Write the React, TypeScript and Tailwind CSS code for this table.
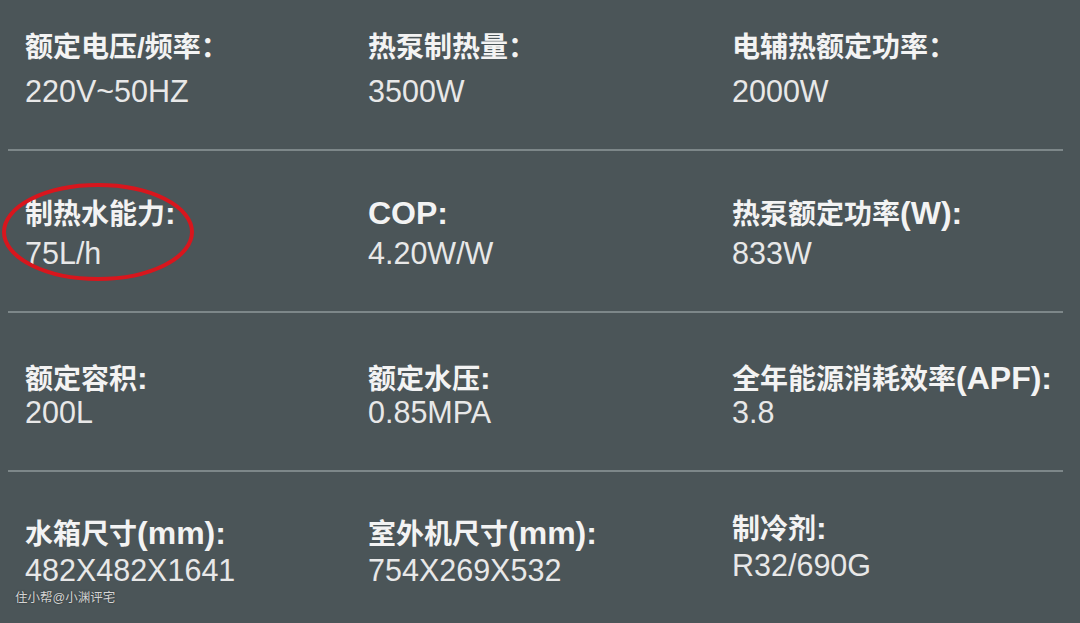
const rows = [
  {
    pt: "pt-[31px]",
    gap: "mt-[8px]",
    h: "h-[149px]",
    items: [
      ["额定电压/频率：", "220V~50HZ"],
      ["热泵制热量：", "3500W"],
      ["电辅热额定功率：", "2000W"],
    ],
  },
  {
    pt: "pt-[45px]",
    gap: "mt-[3px]",
    h: "h-[160px]",
    items: [
      ["制热水能力:", "75L/h"],
      ["COP:", "4.20W/W"],
      ["热泵额定功率(W):", "833W"],
    ],
  },
  {
    pt: "pt-[48px]",
    gap: "-mt-[3px]",
    h: "h-[157px]",
    items: [
      ["额定容积:", "200L"],
      ["额定水压:", "0.85MPA"],
      ["全年能源消耗效率(APF):", "3.8"],
    ],
  },
  {
    pt: "pt-[44px]",
    gap: "mt-0",
    h: "h-[151px]",
    items: [
      ["水箱尺寸(mm):", "482X482X1641"],
      ["室外机尺寸(mm):", "754X269X532"],
      ["制冷剂:", "R32/690G"],
    ],
  },
];

const cols = ["w-[343px]", "w-[364px]", "flex-1"];

// latin bits in the labels render larger than the CJK glyphs
function Label({ text }: { text: string }) {
  const parts = text.split(/([A-Za-z():]+)/).filter(Boolean);
  return (
    <div className="text-[28px] font-bold leading-[34px] text-[#f3f3f3]">
      {parts.map((p, k) =>
        /^[A-Za-z():]+$/.test(p) ? (
          <span key={k} className="text-[32px]">
            {p}
          </span>
        ) : (
          <span key={k}>{p}</span>
        )
      )}
    </div>
  );
}

export default function App() {
  return (
    <div className="relative h-[623px] w-[1080px] overflow-hidden bg-[#4b5558] font-['Liberation_Sans','Noto_Sans_CJK_SC',sans-serif]">
      {rows.map((row, i) => (
        <div key={i}>
          {i > 0 && (
            <div className="mx-[8px] mr-[17px] h-[2px] bg-[#7d8789]" />
          )}
          <div className={`flex pl-[25px] ${row.h} ${row.pt}`}>
            {row.items.map(([label, value], j) => (
              <div
                key={j}
                className={`flex flex-col ${cols[j]} ${
                  i === 3 && j === 2 ? "-mt-[5px]" : ""
                }`}
              >
                <Label text={label} />
                <div
                  className={`text-[30.5px] leading-[36px] text-[#e8e8e8] ${row.gap}`}
                >
                  {value}
                </div>
              </div>
            ))}
          </div>
        </div>
      ))}

      {/* 红圈 */}
      <svg
        className="pointer-events-none absolute left-0 top-[180px]"
        width="200"
        height="106"
        viewBox="0 0 200 106"
      >
        <ellipse
          cx="98"
          cy="52"
          rx="94"
          ry="47"
          fill="none"
          stroke="#d8161d"
          strokeWidth="4"
        />
      </svg>

      <div className="absolute left-[15px] top-[590px] text-[12.5px] leading-[16px] text-[#d4d4d4] [text-shadow:0_0_2px_rgba(0,0,0,0.5)]">
        住小帮@小渊评宅
      </div>
    </div>
  );
}
